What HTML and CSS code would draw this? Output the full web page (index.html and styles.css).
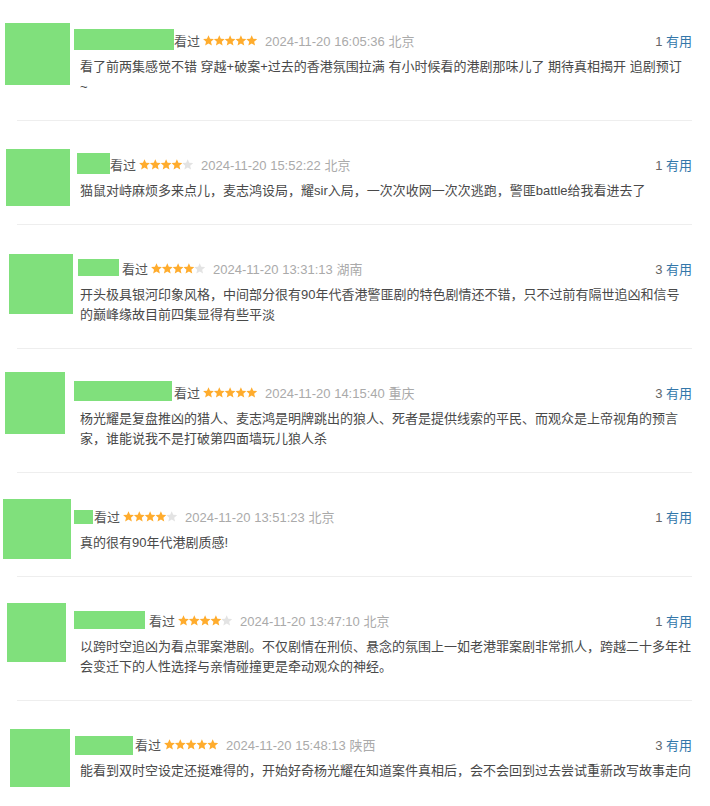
FILE: index.html
```html
<!DOCTYPE html>
<html lang="zh-CN">
<head>
  <meta charset="UTF-8" />
  <meta name="viewport" content="width=device-width, initial-scale=1" />
  <title>短评</title>
  <link rel="stylesheet" href="styles.css">
</head>
<body>

<svg class="sprite" aria-hidden="true">
  <symbol id="star" viewBox="0 0 10 10">
    <polygon points="5,0.2 6.4,3.4 9.9,3.7 7.25,6.05 8.05,9.5 5,7.7 1.95,9.5 2.75,6.05 0.1,3.7 3.6,3.4" />
  </symbol>
</svg>

<div class="comments">

  <div class="item c1">
    <span class="avatar"></span>
    <div class="body">
      <div class="info">
        <span class="name"></span><span class="watched">看过</span>
        <svg class="rating" viewBox="0 0 54 11"><use href="#star" class="on" x="0" width="11" height="11"/><use href="#star" class="on" x="10.8" width="11" height="11"/><use href="#star" class="on" x="21.6" width="11" height="11"/><use href="#star" class="on" x="32.4" width="11" height="11"/><use href="#star" class="on" x="43.2" width="11" height="11"/></svg>
        <span class="time">2024-11-20 16:05:36 北京</span>
        <span class="vote"><span class="count">1</span> <a class="useful">有用</a></span>
      </div>
      <p class="text">看了前两集感觉不错 穿越+破案+过去的香港氛围拉满 有小时候看的港剧那味儿了 期待真相揭开 追剧预订 ~</p>
    </div>
  </div>

  <div class="item c2">
    <span class="avatar"></span>
    <div class="body">
      <div class="info">
        <span class="name"></span><span class="watched">看过</span>
        <svg class="rating" viewBox="0 0 54 11"><use href="#star" class="on" x="0" width="11" height="11"/><use href="#star" class="on" x="10.8" width="11" height="11"/><use href="#star" class="on" x="21.6" width="11" height="11"/><use href="#star" class="on" x="32.4" width="11" height="11"/><use href="#star" class="off" x="43.2" width="11" height="11"/></svg>
        <span class="time">2024-11-20 15:52:22 北京</span>
        <span class="vote"><span class="count">1</span> <a class="useful">有用</a></span>
      </div>
      <p class="text">猫鼠对峙麻烦多来点儿，麦志鸿设局，耀sir入局，一次次收网一次次逃跑，警匪battle给我看进去了</p>
    </div>
  </div>

  <div class="item c3">
    <span class="avatar"></span>
    <div class="body">
      <div class="info">
        <span class="name"></span><span class="watched">看过</span>
        <svg class="rating" viewBox="0 0 54 11"><use href="#star" class="on" x="0" width="11" height="11"/><use href="#star" class="on" x="10.8" width="11" height="11"/><use href="#star" class="on" x="21.6" width="11" height="11"/><use href="#star" class="on" x="32.4" width="11" height="11"/><use href="#star" class="off" x="43.2" width="11" height="11"/></svg>
        <span class="time">2024-11-20 13:31:13 湖南</span>
        <span class="vote"><span class="count">3</span> <a class="useful">有用</a></span>
      </div>
      <p class="text">开头极具银河印象风格，中间部分很有90年代香港警匪剧的特色剧情还不错，只不过前有隔世追凶和信号的巅峰缘故目前四集显得有些平淡</p>
    </div>
  </div>

  <div class="item c4">
    <span class="avatar"></span>
    <div class="body">
      <div class="info">
        <span class="name"></span><span class="watched">看过</span>
        <svg class="rating" viewBox="0 0 54 11"><use href="#star" class="on" x="0" width="11" height="11"/><use href="#star" class="on" x="10.8" width="11" height="11"/><use href="#star" class="on" x="21.6" width="11" height="11"/><use href="#star" class="on" x="32.4" width="11" height="11"/><use href="#star" class="on" x="43.2" width="11" height="11"/></svg>
        <span class="time">2024-11-20 14:15:40 重庆</span>
        <span class="vote"><span class="count">3</span> <a class="useful">有用</a></span>
      </div>
      <p class="text">杨光耀是复盘推凶的猎人、麦志鸿是明牌跳出的狼人、死者是提供线索的平民、而观众是上帝视角的预言家，谁能说我不是打破第四面墙玩儿狼人杀</p>
    </div>
  </div>

  <div class="item c5">
    <span class="avatar"></span>
    <div class="body">
      <div class="info">
        <span class="name"></span><span class="watched">看过</span>
        <svg class="rating" viewBox="0 0 54 11"><use href="#star" class="on" x="0" width="11" height="11"/><use href="#star" class="on" x="10.8" width="11" height="11"/><use href="#star" class="on" x="21.6" width="11" height="11"/><use href="#star" class="on" x="32.4" width="11" height="11"/><use href="#star" class="off" x="43.2" width="11" height="11"/></svg>
        <span class="time">2024-11-20 13:51:23 北京</span>
        <span class="vote"><span class="count">1</span> <a class="useful">有用</a></span>
      </div>
      <p class="text">真的很有90年代港剧质感!</p>
    </div>
  </div>

  <div class="item c6">
    <span class="avatar"></span>
    <div class="body">
      <div class="info">
        <span class="name"></span><span class="watched">看过</span>
        <svg class="rating" viewBox="0 0 54 11"><use href="#star" class="on" x="0" width="11" height="11"/><use href="#star" class="on" x="10.8" width="11" height="11"/><use href="#star" class="on" x="21.6" width="11" height="11"/><use href="#star" class="on" x="32.4" width="11" height="11"/><use href="#star" class="off" x="43.2" width="11" height="11"/></svg>
        <span class="time">2024-11-20 13:47:10 北京</span>
        <span class="vote"><span class="count">1</span> <a class="useful">有用</a></span>
      </div>
      <p class="text">以跨时空追凶为看点罪案港剧。不仅剧情在刑侦、悬念的氛围上一如老港罪案剧非常抓人，跨越二十多年社会变迁下的人性选择与亲情碰撞更是牵动观众的神经。</p>
    </div>
  </div>

  <div class="item c7">
    <span class="avatar"></span>
    <div class="body">
      <div class="info">
        <span class="name"></span><span class="watched">看过</span>
        <svg class="rating" viewBox="0 0 54 11"><use href="#star" class="on" x="0" width="11" height="11"/><use href="#star" class="on" x="10.8" width="11" height="11"/><use href="#star" class="on" x="21.6" width="11" height="11"/><use href="#star" class="on" x="32.4" width="11" height="11"/><use href="#star" class="on" x="43.2" width="11" height="11"/></svg>
        <span class="time">2024-11-20 15:48:13 陕西</span>
        <span class="vote"><span class="count">3</span> <a class="useful">有用</a></span>
      </div>
      <p class="text">能看到双时空设定还挺难得的，开始好奇杨光耀在知道案件真相后，会不会回到过去尝试重新改写故事走向</p>
    </div>
  </div>

</div>

</body>
</html>
```

FILE: styles.css
```css
body {
  margin: 0;
  background: #fff;
  font-family: "Liberation Sans", Arial, "Noto Sans CJK SC", sans-serif;
  font-size: 13px;
  color: #494949;
}
.sprite {
  position: absolute;
  width: 0;
  height: 0;
  overflow: hidden;
}
.comments {
  margin: 0 18px 0 17px;
}
.item {
  position: relative;
  display: flex;
  padding: 33px 0 23px 63px;
  border-bottom: 1px solid #eee;
}
.item.c1 {
  padding-top: 30px;
}
.item:last-child {
  border-bottom: none;
}
/* redacted avatar / user name */
.avatar {
  position: absolute;
  background: #80e07c;
}
.name {
  display: inline-block;
  flex: none;
  background: #80e07c;
}
.body {
  flex: 1;
  min-width: 0;
}
.info {
  display: flex;
  align-items: center;
  height: 20px;
  white-space: nowrap;
}
.watched {
  color: #555;
}
.rating {
  width: 54px;
  height: 11px;
  margin-left: 3px;
  flex: none;
}
.rating .on {
  fill: #ffac2d;
}
.rating .off {
  fill: #e3e3e3;
}
.time {
  margin-left: 8px;
  color: #aaa;
}
.vote {
  margin-left: auto;
  color: #666;
}
.useful {
  color: #37a;
  text-decoration: none;
}
.text {
  margin: 7px 0 0;
  line-height: 20px;
}

.c1 .avatar { top: 23px; left: -12px; width: 65px; height: 62px; }
.c2 .avatar { top: 28px; left: -11px; width: 64px; height: 57px; }
.c3 .avatar { top: 29px; left: -8px; width: 64px; height: 60px; }
.c4 .avatar { top: 23px; left: -12px; width: 60px; height: 62px; }
.c5 .avatar { top: 26px; left: -14px; width: 68px; height: 60px; }
.c6 .avatar { top: 26px; left: -10px; width: 59px; height: 59px; }
.c7 .avatar { top: 28px; left: -7px; width: 60px; height: 58px; }

.c1 .name { margin: -2px 0 0 -6px; width: 100px; height: 21px; }
.c2 .name { margin: -1px 0 0 -3px; width: 33px; height: 21px; }
.c3 .name { margin: -1px 3px 0 -2px; width: 41px; height: 17px; }
.c4 .name { margin: -2px 2px 0 -6px; width: 98px; height: 20px; }
.c5 .name { margin: 2px 1px 0 -6px; width: 19px; height: 14px; }
.c6 .name { margin: 0 4px 0 -6px; width: 71px; height: 18px; }
.c7 .name { margin: 3px 2px 0 -5px; width: 58px; height: 19px; }
```
